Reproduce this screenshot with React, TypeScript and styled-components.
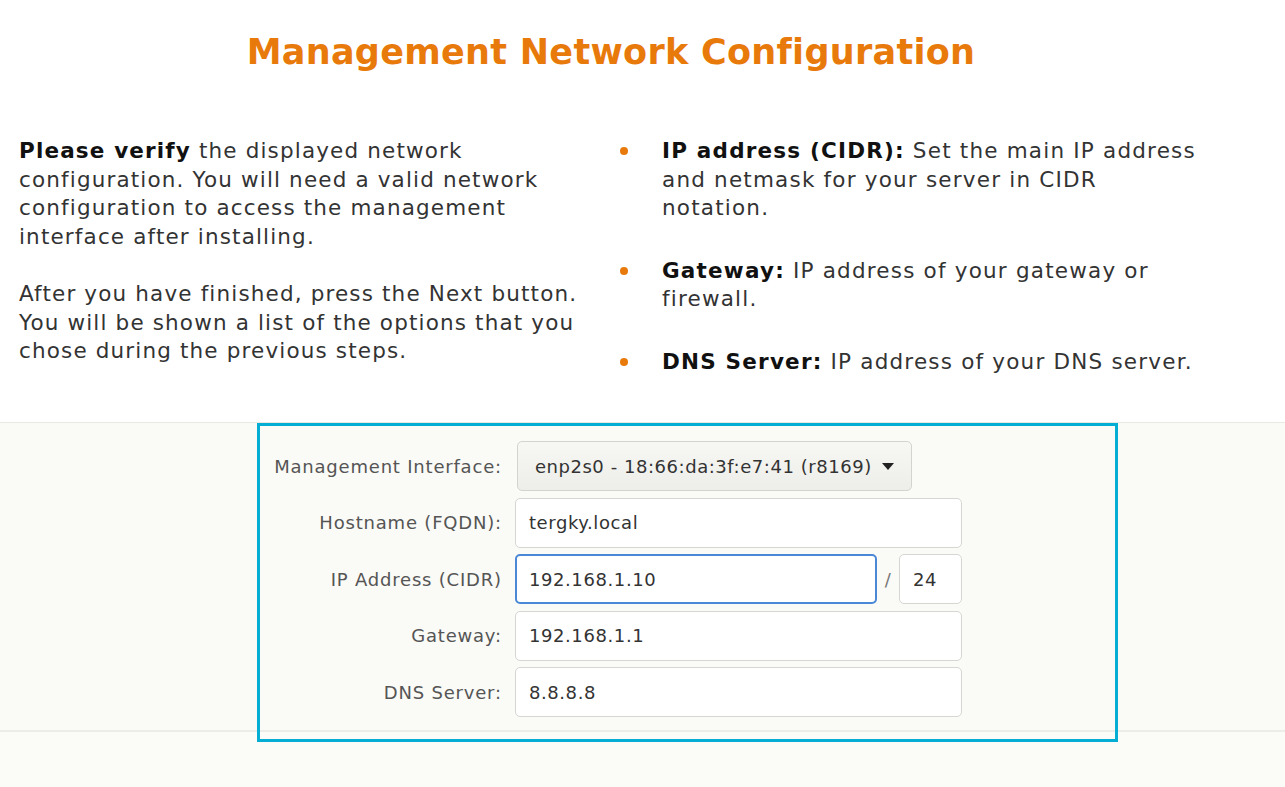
import React from "react";
import styled, { createGlobalStyle } from "styled-components";

const GlobalStyle = createGlobalStyle`
  html, body { margin: 0; padding: 0; }
  body {
    background: #ffffff;
    font-family: "DejaVu Sans", "Liberation Sans", sans-serif;
    color: #333;
  }
  * { box-sizing: border-box; }
`;

const Page = styled.div`
  position: relative;
  width: 1285px;
  min-height: 787px;
  display: flex;
  flex-direction: column;
  background: #fbfbf7;
  overflow: hidden;
`;

const Top = styled.section`
  background: #ffffff;
  padding: 28px 0 46px 0;
  display: flex;
  flex-direction: column;
`;

const Title = styled.h1`
  margin: 0;
  width: 1222px;
  text-align: center;
  color: #e87a0c;
  font-size: 35px;
  line-height: 48px;
  font-weight: bold;
  letter-spacing: 0.3px;
`;

const Columns = styled.div`
  display: grid;
  grid-template-columns: 600px 1fr;
  padding: 61px 0 0 19px;
`;

const Paragraph = styled.p`
  margin: 0 0 29px 0;
  font-size: 21.5px;
  line-height: 28.5px;
  letter-spacing: 1.15px;
  color: #333;
  white-space: nowrap;
  &:last-child { margin-bottom: 0; }
`;

const Strong = styled.b`
  color: #111;
`;

const BulletList = styled.ul`
  margin: 0;
  padding: 0;
  list-style: none;
  display: flex;
  flex-direction: column;
  gap: 34px;
`;

const BulletItem = styled.li`
  display: grid;
  grid-template-columns: 43px 1fr;
  font-size: 21.5px;
  line-height: 28.5px;
  letter-spacing: 1.2px;
  color: #333;
  white-space: nowrap;
`;

const Dot = styled.span`
  display: block;
  width: 8px;
  height: 8px;
  border-radius: 50%;
  background: #e87a0c;
  margin: 10px 0 0 1px;
`;

const Band = styled.section`
  background: #fafaf6;
  border-top: 1px solid #e8e8e4;
  border-bottom: 2px solid #ecece8;
  padding: 18px 0 13px 0;
  display: flex;
`;

const FormGrid = styled.div`
  width: 1236px;
  display: grid;
  grid-template-columns: auto 447px;
  justify-content: center;
  column-gap: 13px;
  row-gap: 6.5px;
  align-items: center;
`;

const Label = styled.label`
  text-align: right;
  font-size: 18px;
  letter-spacing: 0.8px;
  color: #555;
  white-space: nowrap;
`;

const SelectButton = styled.div`
  width: 395px;
  height: 50px;
  margin-left: 2px;
  display: flex;
  align-items: center;
  gap: 10px;
  padding: 0 17px;
  border: 1px solid #d3d3cf;
  border-radius: 5px;
  background: linear-gradient(#f7f7f4, #ededea);
  font-size: 18px;
  letter-spacing: 0.55px;
  color: #333;
  white-space: nowrap;
`;

const Arrow = styled.span`
  width: 0;
  height: 0;
  border-left: 6.5px solid transparent;
  border-right: 6.5px solid transparent;
  border-top: 7px solid #222;
`;

const Field = styled.div<{ $width?: number; $focused?: boolean }>`
  width: ${(p) => (p.$width ? `${p.$width}px` : "100%")};
  height: 50px;
  display: flex;
  align-items: center;
  padding: 0 ${(p) => (p.$focused ? 12 : 13)}px;
  background: #ffffff;
  border: ${(p) => (p.$focused ? "2px solid #4a87d6" : "1px solid #d6d6d2")};
  border-radius: 5px;
  font-size: 18px;
  letter-spacing: 0.6px;
  color: #333;
  white-space: nowrap;
`;

const CidrRow = styled.div`
  display: flex;
  align-items: center;
`;

const Slash = styled.span`
  width: 22px;
  text-align: center;
  font-size: 18px;
  color: #777;
`;

const Bottom = styled.div`
  flex: 1;
  background: #fbfbf7;
`;

const Highlight = styled.div`
  position: absolute;
  left: 257px;
  top: 423px;
  width: 861px;
  height: 319px;
  border: 3px solid #03add3;
  pointer-events: none;
`;

export default function App() {
  return (
    <>
      <GlobalStyle />
      <Page>
        <Top>
          <Title>Management Network Configuration</Title>
          <Columns>
            <div>
              <Paragraph>
                <Strong>Please verify</Strong> the displayed network
                <br />
                configuration. You will need a valid network
                <br />
                configuration to access the management
                <br />
                interface after installing.
              </Paragraph>
              <Paragraph>
                After you have finished, press the Next button.
                <br />
                You will be shown a list of the options that you
                <br />
                chose during the previous steps.
              </Paragraph>
            </div>
            <BulletList>
              <BulletItem>
                <Dot />
                <span>
                  <Strong>IP address (CIDR):</Strong> Set the main IP address
                  <br />
                  and netmask for your server in CIDR
                  <br />
                  notation.
                </span>
              </BulletItem>
              <BulletItem>
                <Dot />
                <span>
                  <Strong>Gateway:</Strong> IP address of your gateway or
                  <br />
                  firewall.
                </span>
              </BulletItem>
              <BulletItem>
                <Dot />
                <span>
                  <Strong>DNS Server:</Strong> IP address of your DNS server.
                </span>
              </BulletItem>
            </BulletList>
          </Columns>
        </Top>
        <Band>
          <FormGrid>
            <Label>Management Interface:</Label>
            <SelectButton>
              enp2s0 - 18:66:da:3f:e7:41 (r8169)
              <Arrow />
            </SelectButton>
            <Label>Hostname (FQDN):</Label>
            <Field>tergky.local</Field>
            <Label>IP Address (CIDR)</Label>
            <CidrRow>
              <Field $width={362} $focused>
                192.168.1.10
              </Field>
              <Slash>/</Slash>
              <Field $width={63}>24</Field>
            </CidrRow>
            <Label>Gateway:</Label>
            <Field>192.168.1.1</Field>
            <Label>DNS Server:</Label>
            <Field>8.8.8.8</Field>
          </FormGrid>
        </Band>
        <Bottom />
        <Highlight />
      </Page>
    </>
  );
}
